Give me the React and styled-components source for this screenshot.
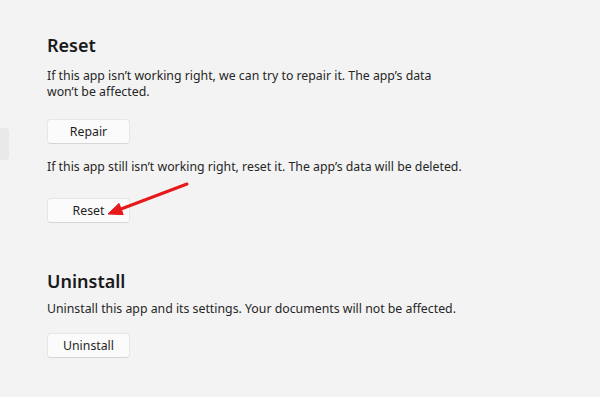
import React from 'react'
import styled, { createGlobalStyle } from 'styled-components'

const Global = createGlobalStyle`
  html, body {
    margin: 0;
    padding: 0;
    background: #f3f3f3;
  }
  body {
    font-family: "Noto Sans", "Open Sans", sans-serif;
    color: #1b1b1b;
  }
`

const Page = styled.div`
  position: relative;
  display: flex;
  width: 600px;
  height: 397px;
  overflow: hidden;
  background: #f3f3f3;
`

const Sidebar = styled.div`
  width: 9px;
  flex-shrink: 0;
  padding-top: 128px;
`

const NavItem = styled.div`
  height: 32px;
  background: #e9e9e9;
  border-radius: 0 4px 4px 0;
`

const Content = styled.div`
  display: flex;
  flex-direction: column;
  padding: 32px 0 0 38px;
`

const Section = styled.section`
  display: flex;
  flex-direction: column;
  margin-bottom: ${p => p.gap || 0}px;
`

const Heading = styled.h2`
  margin: 0 0 ${p => p.after || 10}px;
  font-size: 18px;
  font-weight: 600;
  line-height: 26px;
  color: #1a1a1a;
`

const Text = styled.p`
  margin: 0 0 ${p => p.after || 14}px;
  font-size: 12.3px;
  line-height: 16px;
  color: #262626;
`

const Button = styled.button`
  width: 83px;
  height: 25px;
  margin-bottom: ${p => p.after || 0}px;
  background: #fbfbfb;
  border: 1px solid #e6e6e6;
  border-bottom-color: #d6d6d6;
  border-radius: 4px;
  font-family: inherit;
  font-size: 12.3px;
  color: #1f1f1f;
  padding: 0;
`

const Arrow = styled.svg`
  position: absolute;
  left: 100px;
  top: 176px;
`

export default function App() {
  return (
    <Page>
      <Global />
      <Sidebar>
        <NavItem />
      </Sidebar>
      <Content>
        <Section gap={45}>
          <Heading after={10}>Reset</Heading>
          <Text after={19}>
            If this app isn’t working right, we can try to repair it. The app’s data<br />
            won’t be affected.
          </Text>
          <Button after={15}>Repair</Button>
          <Text after={23}>
            If this app still isn’t working right, reset it. The app’s data will be deleted.
          </Text>
          <Button>Reset</Button>
        </Section>
        <Section>
          <Heading after={7}>Uninstall</Heading>
          <Text after={16}>
            Uninstall this app and its settings. Your documents will not be affected.
          </Text>
          <Button>Uninstall</Button>
        </Section>
      </Content>
      <Arrow width="95" height="45" viewBox="0 0 95 45">
        <line x1="87" y1="8" x2="21" y2="33" stroke="#e8191b" strokeWidth="3" strokeLinecap="round" />
        <polygon points="8,38 19,27.4 23.2,38.6" fill="#e8191b" stroke="#e8191b" strokeWidth="1" strokeLinejoin="round" />
      </Arrow>
    </Page>
  )
}
